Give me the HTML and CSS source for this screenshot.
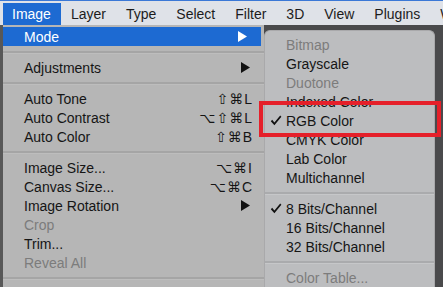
FILE: index.html
```html
<!DOCTYPE html>
<html lang="en">
<head>
  <meta charset="UTF-8">
  <title>Image menu</title>
  <link rel="stylesheet" href="styles.css">
</head>
<body>
  <!-- Menüleiste -->
  <div class="menubar">
    <span class="menubar-item active">Image</span>
    <span class="menubar-item">Layer</span>
    <span class="menubar-item">Type</span>
    <span class="menubar-item">Select</span>
    <span class="menubar-item">Filter</span>
    <span class="menubar-item">3D</span>
    <span class="menubar-item">View</span>
    <span class="menubar-item">Plugins</span>
    <span class="menubar-item">Window</span>
  </div>

  <div class="workspace">
    <div class="edge-left"></div>

    <!-- Hauptmenü -->
    <div class="menu">
      <div class="row selected"><span>Mode</span><svg class="arrow" width="9" height="11" viewBox="0 0 9 11"><polygon points="0,0 9,5.5 0,11" fill="#fff"/></svg></div>
      <div class="sep"></div>
      <div class="row"><span>Adjustments</span><svg class="arrow" width="9" height="11" viewBox="0 0 9 11"><polygon points="0,0 9,5.5 0,11" fill="#111"/></svg></div>
      <div class="sep"></div>
      <div class="row"><span>Auto Tone</span><span class="key">⇧⌘L</span></div>
      <div class="row"><span>Auto Contrast</span><span class="key">⌥⇧⌘L</span></div>
      <div class="row"><span>Auto Color</span><span class="key">⇧⌘B</span></div>
      <div class="sep"></div>
      <div class="row"><span>Image Size...</span><span class="key">⌥⌘I</span></div>
      <div class="row"><span>Canvas Size...</span><span class="key">⌥⌘C</span></div>
      <div class="row"><span>Image Rotation</span><svg class="arrow" width="9" height="11" viewBox="0 0 9 11"><polygon points="0,0 9,5.5 0,11" fill="#111"/></svg></div>
      <div class="row disabled"><span>Crop</span></div>
      <div class="row"><span>Trim...</span></div>
      <div class="row disabled"><span>Reveal All</span></div>
      <div class="sep"></div>
    </div>

    <div class="edge-right"></div>

    <!-- Untermenü Mode -->
    <div class="submenu">
      <div class="row disabled"><span class="check"></span><span>Bitmap</span></div>
      <div class="row"><span class="check"></span><span>Grayscale</span></div>
      <div class="row disabled"><span class="check"></span><span>Duotone</span></div>
      <div class="row"><span class="check"></span><span>Indexed Color</span></div>
      <div class="row"><span class="check"><svg width="12" height="11" viewBox="0 0 12 11"><path d="M0.8 6.2 L2.2 4.8 L4.4 7.4 L10.2 0.6 L11.4 1.8 L4.4 10.2 Z" fill="#111"/></svg></span><span>RGB Color</span></div>
      <div class="row"><span class="check"></span><span>CMYK Color</span></div>
      <div class="row"><span class="check"></span><span>Lab Color</span></div>
      <div class="row"><span class="check"></span><span>Multichannel</span></div>
      <div class="sep"></div>
      <div class="row"><span class="check"><svg width="12" height="11" viewBox="0 0 12 11"><path d="M0.8 6.2 L2.2 4.8 L4.4 7.4 L10.2 0.6 L11.4 1.8 L4.4 10.2 Z" fill="#111"/></svg></span><span>8 Bits/Channel</span></div>
      <div class="row"><span class="check"></span><span>16 Bits/Channel</span></div>
      <div class="row"><span class="check"></span><span>32 Bits/Channel</span></div>
      <div class="sep"></div>
      <div class="row disabled"><span class="check"></span><span>Color Table...</span></div>
    </div>

    <div class="highlight-box"></div>
  </div>
</body>
</html>
```
FILE: styles.css
```css
body {
  margin: 0;
  width: 443px;
  height: 287px;
  overflow: hidden;
  font-family: "Liberation Sans", "DejaVu Sans", Arial, sans-serif;
  font-size: 14px;
  color: #151515;
  background-color: #4c4c4e;
}

.menubar {
  display: flex;
  height: 25px;
  padding-left: 3px;
  box-sizing: border-box;
  border-top: 1px solid #3b78d6;
  background-color: #dfe2e8;
  white-space: nowrap;
  align-items: stretch;
}

.menubar-item {
  padding: 2px 10px 0 9px;
  margin-top: 2px;
  margin-right: 1px;
  line-height: 19px;
  color: #1c1c1c;
}

.menubar-item.active {
  background-color: #1d6ad2;
  color: #fff;
}

.workspace {
  position: relative;
  display: flex;
  height: 262px;
}

.edge-left {
  width: 3px;
  background-color: #585858;
}

.menu {
  width: 261px;
  padding-top: 2px;
  background-color: #b6b6b6;
}

.edge-right {
  flex: 1;
  background-color: #b6b6b6;
}

.row {
  display: flex;
  align-items: center;
  height: 19px;
  padding: 0 11px 0 21px;
}

.row .key {
  margin-left: auto;
  letter-spacing: 1px;
  font-size: 14px;
}

.row .arrow {
  margin-left: auto;
  margin-right: 3px;
}

.row.selected {
  background-color: #1d6ad2;
  color: #fff;
  margin-right: 3px;
}

.row.disabled {
  color: #7c7c7c;
}

.sep {
  height: 12px;
  display: flex;
  align-items: center;
}

.sep::before {
  content: "";
  flex: 1;
  height: 2px;
  background-color: #a5a5a5;
  border-bottom: 1px solid #bdbdbd;
}

.submenu {
  position: absolute;
  left: 264px;
  top: 5px;
  width: 171px;
  height: 270px;
  padding-top: 4px;
  box-sizing: border-box;
  background-color: #bcbdbf;
  border: 1px solid #a9a9ab;
  border-bottom: none;
  border-radius: 6px 6px 0 0;
}

.submenu .row {
  padding: 0 0 0 5px;
}

.submenu .check {
  width: 16px;
  display: flex;
  align-items: center;
}

.submenu .sep::before {
  background-color: #aaabad;
  border-bottom-color: #c6c7c9;
}

.edge-right {
  background-color: #4a4a4c;
}

.highlight-box {
  position: absolute;
  left: 259px;
  top: 76px;
  width: 174px;
  height: 28px;
  border: 4px solid #e5202a;
}
```
